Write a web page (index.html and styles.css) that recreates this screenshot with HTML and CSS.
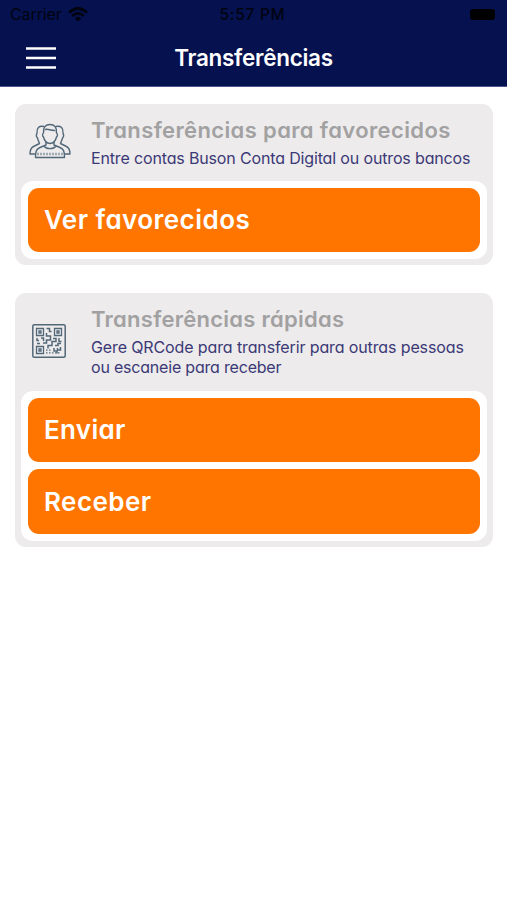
FILE: index.html
```html
<!DOCTYPE html>
<html lang="pt-BR">
<head>
<meta charset="utf-8">
<title>Transferências</title>
<link rel="stylesheet" href="styles.css">
</head>
<body>
<header class="top">
  <div class="status">
    <div class="carrier"><span class="carrier-name">Carrier</span>
      <svg class="wifi" width="20" height="15" viewBox="0 0 20 15" fill="none" stroke="#000310" stroke-width="2.7"><path d="M1 5.6Q10-2.6 19 5.6M4.2 9Q10 3.8 15.8 9"/><path d="M6.7 11.3Q10 8.3 13.3 11.3L10 14.5Z" fill="#000310" stroke="none"/></svg>
    </div>
    <span class="clock">5:57 PM</span>
    <span class="battery"></span>
  </div>
  <nav class="bar">
    <svg class="menu" width="30" height="24" viewBox="0 0 30 24" stroke="#fff" stroke-width="2.5"><path d="M0 2.5H30M0 12H30M0 21.5H30"/></svg>
    <h1>Transferências</h1>
    <span></span>
  </nav>
</header>
<main>
  <section class="card">
    <div class="info">
      <svg class="icon people" width="42" height="36" viewBox="0 0 42 36" fill="none" stroke="#526879" stroke-width="1.4" stroke-linecap="round" stroke-linejoin="round">
        <path d="M14.5 10C14 4.500 16.500 1.500 21 1.500S28 4.500 27.500 10C29 11 28.500 13.500 27.500 14C26.500 18 24 20.500 21 20.500S15.500 18 14.500 14C13.500 13.500 13 11 14.500 10Z"/>
        <path d="M16.500 6.500C19 5.500 21 7.500 25.500 7.500M17 19V22L11 24.500C7.500 26 6.500 28 6.500 34.500H35.500C35.500 28 34.500 26 31 24.500L25 22V19M15 23C17.500 26.500 24.500 26.500 27 23"/>
        <path d="M15 3.500C10 2.500 7.500 5 8 10C7 12 7.500 14 8.500 15C9 17.500 10 18.500 10.500 20.500L4.500 23.500C1.500 25 1 28 1 31H6M27 3.500C32 2.500 34.500 5 34 10C35 12 34.500 14 33.500 15C33 17.500 32 18.500 31.500 20.500L37.500 23.500C40.500 25 41 28 41 31H36"/>
        <path d="M8.500 31H34" stroke-width="2.500" stroke-dasharray="1 2" stroke-linecap="butt"/>
      </svg>
      <div class="copy"><h2 class="t-fav">Transferências para favorecidos</h2><p class="s-fav">Entre contas Buson Conta Digital ou outros bancos</p></div>
    </div>
    <div class="actions"><a class="btn b-ver">Ver favorecidos</a></div>
  </section>
  <section class="card quick">
    <div class="info">
      <svg class="icon qr" width="34" height="34" viewBox="0 0 34 34" fill="none" stroke="#526879" stroke-width="1.3">
        <rect x=".8" y=".8" width="32.400" height="32.400" rx="1.500" stroke-width="1.500"/>
        <path d="M4.500 4.500h7v7h-7zM22.500 4.500h7v7h-7zM4.500 22.500h7v7h-7z"/>
        <path d="M7 7h2v2H7zM25 7h2v2h-2zM7 25h2v2H7z"/>
        <path d="M14.500 4.500h3v3h2M14.500 9v3h4v4h-4v3H11M5 14v2.500h2M9 14h2.500v3M5 19.500h3M21 14.500h3v3h-4v4h-4v3M27 14v3.500h2.500M23 21.500h3v-2h3M28.500 23v3h-3v-2M22 24v3h3v2.500" stroke-width="1.500"/>
        <path d="M14 28.800H29M14 26.200H20" stroke-dasharray="1.500 1.500"/>
      </svg>
      <div class="copy"><h2 class="t-rap">Transferências rápidas</h2><p><span class="s-l1">Gere QRCode para transferir para outras pessoas</span><br><span class="s-l2">ou escaneie para receber</span></p></div>
    </div>
    <div class="actions"><a class="btn b-env">Enviar</a><a class="btn b-rec">Receber</a></div>
  </section>
</main>
</body>
</html>
```
FILE: styles.css
```css
* { box-sizing: border-box; margin: 0; }
body {
  width: 507px; height: 900px; overflow: hidden; background: #fff;
  font-family: Inter, "Liberation Sans", sans-serif;
}
.top { height: 87px; background: #06114f; border-bottom: 1px solid #4c568a; }
.status {
  height: 29px; padding: 0 12px 0 10px; color: #000310; font-size: 16px; line-height: 29px;
  display: grid; grid-template-columns: 1fr auto 1fr; align-items: center;
}
.carrier { display: flex; align-items: center; gap: 6px; }
.carrier-name { letter-spacing: -.1px; }
.clock { font-weight: 500; font-size: 15.500px; letter-spacing: .7px; }
.battery { justify-self: end; width: 25px; height: 11px; border-radius: 3px; background: #000; }
.bar {
  height: 57px; padding: 0 26px; display: grid;
  grid-template-columns: 1fr auto 1fr; align-items: center;
}
h1 { font-size: 22.500px; font-weight: 600; color: #fff; letter-spacing: -.3px; }
main { padding: 17px 14px 0 15px; display: flex; flex-direction: column; gap: 28px; }
.card {
  height: 161px; padding: 0 6px 6px; border-radius: 11px; background: #edebec;
  display: flex; flex-direction: column;
}
.quick { height: 253.500px; }
.info { flex: 1; display: flex; align-items: flex-start; padding-left: 8px; }
.icon { flex: none; }
.people { margin: 19px -1px 0 0; }
.qr { margin: 31px 4px 0 3px; }
.copy { margin-left: 21px; padding-top: 12px; white-space: nowrap; font-feature-settings: "cv11"; }
h2 { font-size: 22px; line-height: 28px; font-weight: 600; color: #a2a1a2; }
p { font-size: 16px; line-height: 20px; margin-top: 4px; color: #3b3976; }
.t-fav { letter-spacing: .37px; }
.t-rap { letter-spacing: .27px; }
.s-fav { letter-spacing: -.15px; }
.s-l1 { letter-spacing: -.12px; }
.s-l2 { letter-spacing: -.2px; }
.actions {
  padding: 7px; border-radius: 12px; background: #fff;
  display: flex; flex-direction: column; gap: 7px;
}
.quick .actions { padding: 6.500px 7px 7px; }
.btn {
  height: 64.500px; border-radius: 11px; background: #ff7500; color: #fff;
  padding-left: 16px; display: flex; align-items: center;
  font-size: 26px; font-weight: 600; font-feature-settings: "cv11";
}
.b-ver { letter-spacing: .45px; }
.b-env { letter-spacing: .3px; }
.b-rec { letter-spacing: .45px; }
```
